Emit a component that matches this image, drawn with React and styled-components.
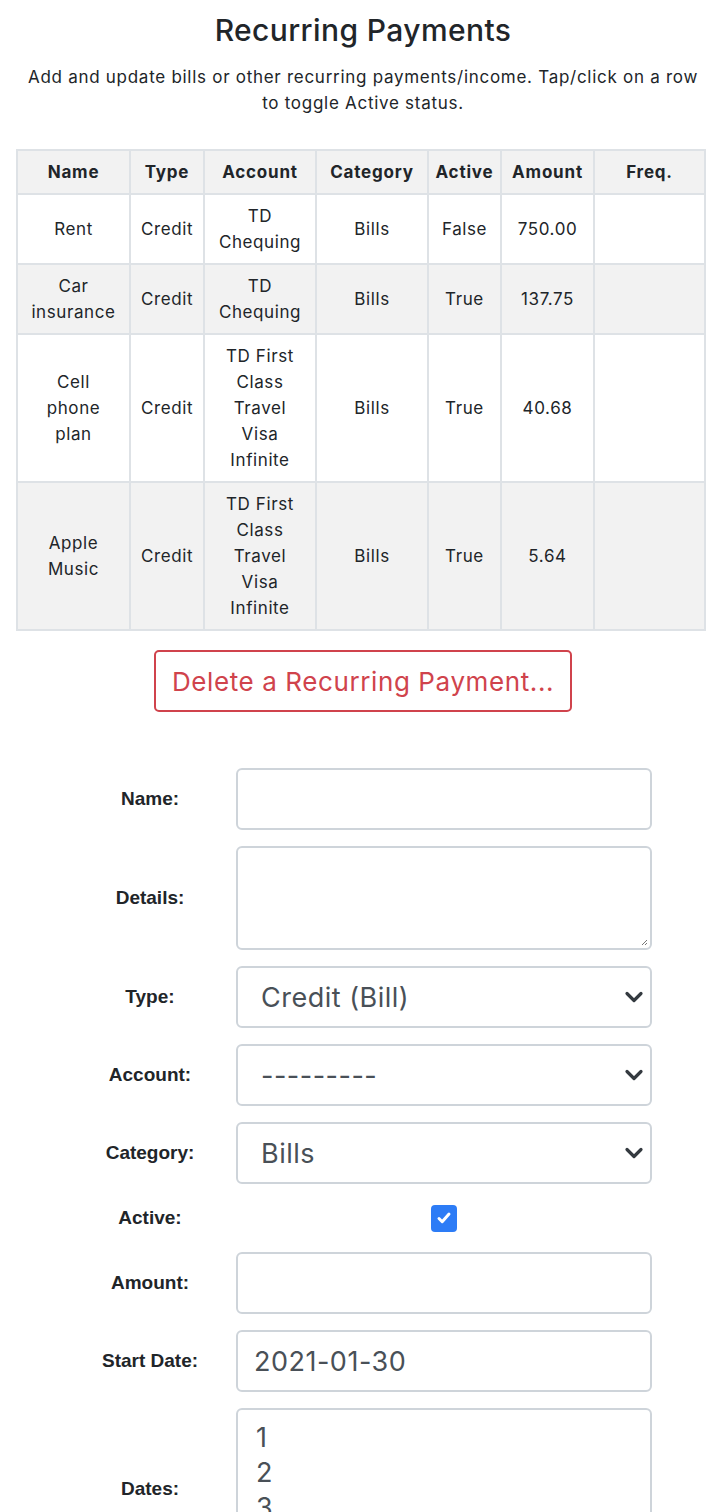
import React from 'react';
import styled, { createGlobalStyle } from 'styled-components';

const GlobalStyle = createGlobalStyle`
    body {
        margin: 0;
        background: #fff;
        color: #212529;
        font-family: Inter, "Noto Sans", sans-serif;
    }
`;

// newlines match how the cells wrap in the narrow table
const payments = [
    { name: 'Rent', type: 'Credit', account: 'TD\nChequing', category: 'Bills', active: 'False', amount: '750.00' },
    { name: 'Car\ninsurance', type: 'Credit', account: 'TD\nChequing', category: 'Bills', active: 'True', amount: '137.75' },
    { name: 'Cell\nphone\nplan', type: 'Credit', account: 'TD First\nClass\nTravel\nVisa\nInfinite', category: 'Bills', active: 'True', amount: '40.68' },
    { name: 'Apple\nMusic', type: 'Credit', account: 'TD First\nClass\nTravel\nVisa\nInfinite', category: 'Bills', active: 'True', amount: '5.64' },
];

const columns = [
    { label: 'Name', width: 113 },
    { label: 'Type', width: 74 },
    { label: 'Account', width: 112 },
    { label: 'Category', width: 112 },
    { label: 'Active', width: 73 },
    { label: 'Amount', width: 93 },
    { label: 'Freq.', width: 111 },
];

function Chevron() {
    return (
        <svg width="20" height="14" viewBox="0 0 20 14">
            <path d="M3 3.5l7 7 7-7" fill="none" stroke="#343a40" strokeWidth="3.2" strokeLinecap="round" strokeLinejoin="round" />
        </svg>
    );
}

function App() {
    return (
        <Page>
            <GlobalStyle />
            <Title>Recurring Payments</Title>
            <Intro>
                Add and update bills or other recurring payments/income. Tap/click on a row
                to toggle Active status.
            </Intro>

            <Table>
                <colgroup>
                    {columns.map(c => <col key={c.label} style={{ width: c.width }} />)}
                </colgroup>
                <thead>
                    <tr>
                        {columns.map(c => <Th key={c.label}>{c.label}</Th>)}
                    </tr>
                </thead>
                <tbody>
                    {payments.map((p, i) => (
                        <Row key={p.name} striped={i % 2 === 1}>
                            <Td>{p.name}</Td>
                            <Td>{p.type}</Td>
                            <Td>{p.account}</Td>
                            <Td>{p.category}</Td>
                            <Td>{p.active}</Td>
                            <Td>{p.amount}</Td>
                            <Td></Td>
                        </Row>
                    ))}
                </tbody>
            </Table>

            <DeleteButton>Delete a Recurring Payment...</DeleteButton>

            <Form>
                <Label>Name:</Label>
                <TextBox />

                <Label>Details:</Label>
                <TextArea>
                    <ResizeGrip viewBox="0 0 8 8" width="8" height="8">
                        <path d="M7 2L2 7M7 5L5 7" stroke="#777" strokeWidth="1" />
                    </ResizeGrip>
                </TextArea>

                <Label>Type:</Label>
                <Select>Credit (Bill)<Chevron /></Select>

                <Label>Account:</Label>
                <Select>---------<Chevron /></Select>

                <Label>Category:</Label>
                <Select>Bills<Chevron /></Select>

                <Label>Active:</Label>
                <CheckCell>
                    <Checkbox>
                        <svg width="18" height="18" viewBox="0 0 18 18">
                            <path d="M4 9.5l3.2 3.2L14 5" fill="none" stroke="#fff" strokeWidth="3" strokeLinecap="round" strokeLinejoin="round" />
                        </svg>
                    </Checkbox>
                </CheckCell>

                <Label>Amount:</Label>
                <TextBox />

                <Label>Start Date:</Label>
                <TextBox>2021-01-30</TextBox>

                <Label>Dates:</Label>
                <ListBox>
                    {[1, 2, 3, 4].map(d => <Option key={d}>{d}</Option>)}
                </ListBox>
            </Form>
        </Page>
    );
}

const Page = styled.div`
    padding: 12px 16px 0;
    display: flex;
    flex-direction: column;
    align-items: center;
`;

const Title = styled.h1`
    margin: 0;
    font-size: 30px;
    line-height: 36px;
    font-weight: 500;
    letter-spacing: 0.4px;
    color: #212529;
`;

const Intro = styled.p`
    margin: 16px 0 0;
    max-width: 686px;
    font-size: 17px;
    line-height: 26px;
    letter-spacing: 0.72px;
    text-align: center;
    color: #212529;
`;

const Table = styled.table`
    align-self: flex-start;
    margin-top: 33px;
    width: 688px;
    table-layout: fixed;
    border-collapse: collapse;
    border: 2px solid #dee2e6;
    font-size: 17px;
    line-height: 26px;
    text-align: center;
`;

const Th = styled.th`
    background: #f2f2f2;
    border: 2px solid #dee2e6;
    padding: 8px 0;
    font-weight: 700;
    letter-spacing: 0.8px;
`;

const Row = styled.tr`
    background: ${({ striped }) => (striped ? '#f2f2f2' : '#fff')};
`;

const Td = styled.td`
    border: 2px solid #dee2e6;
    padding: 8px 2px;
    letter-spacing: 0.6px;
    white-space: pre-line;
    vertical-align: middle;
`;

const DeleteButton = styled.button`
    margin-top: 19px;
    width: 418px;
    height: 62px;
    background: #fff;
    border: 2px solid #d0434c;
    border-radius: 5px;
    color: #d0434c;
    font-family: Inter, "Noto Sans", sans-serif;
    font-size: 26px;
    letter-spacing: 0.6px;
    cursor: pointer;
`;

const Form = styled.div`
    margin-top: 56px;
    margin-left: 6px;
    display: grid;
    grid-template-columns: 140px 416px;
    column-gap: 16px;
    row-gap: 16px;
    align-items: center;
`;

const Label = styled.label`
    text-align: center;
    font-family: "Liberation Sans", Arial, sans-serif;
    font-weight: 700;
    font-size: 19px;
    color: #212529;
`;

const Field = styled.div`
    box-sizing: border-box;
    border: 2px solid #ced4da;
    border-radius: 6px;
    background: #fff;
    color: #495057;
    font-size: 27px;
    letter-spacing: 0.5px;
    padding: 0 16px;
`;

const TextBox = styled(Field)`
    height: 62px;
    display: flex;
    align-items: center;
`;

const TextArea = styled(Field)`
    height: 104px;
    position: relative;
`;

const ResizeGrip = styled.svg`
    position: absolute;
    right: 2px;
    bottom: 2px;
`;

const Select = styled(Field)`
    height: 62px;
    display: flex;
    align-items: center;
    justify-content: space-between;
    padding: 0 6px 0 23px;
`;

const CheckCell = styled.div`
    display: flex;
    justify-content: center;
    align-items: center;
    height: 36px;
`;

const Checkbox = styled.span`
    width: 26px;
    height: 27px;
    border-radius: 4px;
    background: #2d7cf6;
    display: flex;
    align-items: center;
    justify-content: center;
`;

const ListBox = styled(Field)`
    height: 162px;
    padding: 10px 16px;
    overflow: hidden;
`;

const Option = styled.div`
    line-height: 35px;
    padding-left: 2px;
`;

export default App;
